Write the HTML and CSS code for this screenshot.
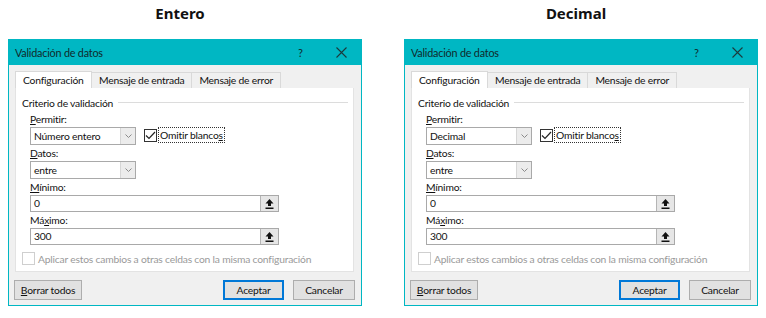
FILE: index.html
```html
<!DOCTYPE html>
<html>
<head>
    <title>Validación de datos</title>
    <link rel="stylesheet" href="styles.css">
</head>
<body>
    <div class="page">
        <div class="column">
            <h2 class="heading">Entero</h2>
            <div class="dialog">
                <div class="titlebar">
                    <span class="title">Validación de datos</span>
                    <span class="help">?</span>
                    <svg class="close" width="11" height="11" viewBox="0 0 11 11"><path d="M0.5 0.5 L10.5 10.5 M10.5 0.5 L0.5 10.5" stroke="#1b3a3c" stroke-width="1.1" fill="none"/></svg>
                </div>
                <div class="tabs">
                    <div class="tab active">Configuración</div>
                    <div class="tab">Mensaje de entrada</div>
                    <div class="tab">Mensaje de error</div>
                </div>
                <div class="panel">
                    <div class="group-title"><span>Criterio de validación</span></div>
                    <div class="label"><u>P</u>ermitir:</div>
                    <div class="row">
                        <div class="select"><span>Número entero</span><span class="arrow"><svg width="7" height="4" viewBox="0 0 7 4"><path d="M0.5 0.5 L3.5 3.5 L6.5 0.5" stroke="#8a8a8a" fill="none"/></svg></span></div>
                        <label class="check"><span class="box"><svg width="11" height="9" viewBox="0 0 11 9"><path d="M1 4.5 L4 7.5 L10 1" stroke="#222" stroke-width="1.2" fill="none"/></svg></span><span class="focus">Omitir blanco<u>s</u></span></label>
                    </div>
                    <div class="label"><u>D</u>atos:</div>
                    <div class="select"><span>entre</span><span class="arrow"><svg width="7" height="4" viewBox="0 0 7 4"><path d="M0.5 0.5 L3.5 3.5 L6.5 0.5" stroke="#8a8a8a" fill="none"/></svg></span></div>
                    <div class="label"><u>M</u>ínimo:</div>
                    <div class="input"><span>0</span><span class="ref"><svg width="9" height="10" viewBox="0 0 9 10"><path d="M4.5 0 L8.5 4.5 L6 4.5 L6 7 L3 7 L3 4.5 L0.5 4.5 Z M0.5 8.5 L8.5 8.5 L8.5 10 L0.5 10 Z" fill="#111"/></svg></span></div>
                    <div class="label">Má<u>x</u>imo:</div>
                    <div class="input"><span>300</span><span class="ref"><svg width="9" height="10" viewBox="0 0 9 10"><path d="M4.5 0 L8.5 4.5 L6 4.5 L6 7 L3 7 L3 4.5 L0.5 4.5 Z M0.5 8.5 L8.5 8.5 L8.5 10 L0.5 10 Z" fill="#111"/></svg></span></div>
                    <div class="apply"><span class="box disabled"></span>Aplicar estos cambios a otras celdas con la misma configuración</div>
                </div>
                <div class="buttons">
                    <button class="btn"><u>B</u>orrar todos</button>
                    <span class="spacer"></span>
                    <button class="btn primary">Aceptar</button>
                    <button class="btn">Cancelar</button>
                </div>
            </div>
        </div>
        <div class="column">
            <h2 class="heading">Decimal</h2>
            <div class="dialog">
                <div class="titlebar">
                    <span class="title">Validación de datos</span>
                    <span class="help">?</span>
                    <svg class="close" width="11" height="11" viewBox="0 0 11 11"><path d="M0.5 0.5 L10.5 10.5 M10.5 0.5 L0.5 10.5" stroke="#1b3a3c" stroke-width="1.1" fill="none"/></svg>
                </div>
                <div class="tabs">
                    <div class="tab active">Configuración</div>
                    <div class="tab">Mensaje de entrada</div>
                    <div class="tab">Mensaje de error</div>
                </div>
                <div class="panel">
                    <div class="group-title"><span>Criterio de validación</span></div>
                    <div class="label"><u>P</u>ermitir:</div>
                    <div class="row">
                        <div class="select"><span>Decimal</span><span class="arrow"><svg width="7" height="4" viewBox="0 0 7 4"><path d="M0.5 0.5 L3.5 3.5 L6.5 0.5" stroke="#8a8a8a" fill="none"/></svg></span></div>
                        <label class="check"><span class="box"><svg width="11" height="9" viewBox="0 0 11 9"><path d="M1 4.5 L4 7.5 L10 1" stroke="#222" stroke-width="1.2" fill="none"/></svg></span><span class="focus">Omitir blanco<u>s</u></span></label>
                    </div>
                    <div class="label"><u>D</u>atos:</div>
                    <div class="select"><span>entre</span><span class="arrow"><svg width="7" height="4" viewBox="0 0 7 4"><path d="M0.5 0.5 L3.5 3.5 L6.5 0.5" stroke="#8a8a8a" fill="none"/></svg></span></div>
                    <div class="label"><u>M</u>ínimo:</div>
                    <div class="input"><span>0</span><span class="ref"><svg width="9" height="10" viewBox="0 0 9 10"><path d="M4.5 0 L8.5 4.5 L6 4.5 L6 7 L3 7 L3 4.5 L0.5 4.5 Z M0.5 8.5 L8.5 8.5 L8.5 10 L0.5 10 Z" fill="#111"/></svg></span></div>
                    <div class="label">Má<u>x</u>imo:</div>
                    <div class="input"><span>300</span><span class="ref"><svg width="9" height="10" viewBox="0 0 9 10"><path d="M4.5 0 L8.5 4.5 L6 4.5 L6 7 L3 7 L3 4.5 L0.5 4.5 Z M0.5 8.5 L8.5 8.5 L8.5 10 L0.5 10 Z" fill="#111"/></svg></span></div>
                    <div class="apply"><span class="box disabled"></span>Aplicar estos cambios a otras celdas con la misma configuración</div>
                </div>
                <div class="buttons">
                    <button class="btn"><u>B</u>orrar todos</button>
                    <span class="spacer"></span>
                    <button class="btn primary">Aceptar</button>
                    <button class="btn">Cancelar</button>
                </div>
            </div>
        </div>
    </div>
</body>
</html>
```

FILE: styles.css
```css
body {
    margin: 0;
    background-color: #fff;
    font-family: Lato, "Noto Sans", sans-serif;
    font-size: 10.3px;
    letter-spacing: -0.2px;
    color: #111;
    white-space: nowrap;
}
.page {
    display: flex;
    gap: 42px;
    padding-left: 8px;
}
.column {
    width: 354px;
}
.heading {
    margin: 0;
    height: 39px;
    padding: 2px 10px 0 0;
    box-sizing: border-box;
    text-align: center;
    font-family: "Noto Sans", sans-serif;
    font-size: 15px;
    font-weight: bold;
    letter-spacing: 0;
    line-height: 22px;
    color: #111;
}
.dialog {
    box-sizing: border-box;
    height: 267px;
    border: 1px solid #00b7c3;
    background-color: #f0f0f0;
}
.titlebar {
    display: flex;
    align-items: center;
    height: 25px;
    padding-left: 6px;
    background-color: #00b7c3;
    color: #10292b;
    font-size: 10.8px;
}
.title {
    flex: 1;
}
.help {
    width: 38px;
    font-size: 11px;
}
.close {
    margin-right: 14px;
}
.tabs {
    display: flex;
    align-items: flex-end;
    height: 17px;
    margin: 6px 6px 0;
}
.tab {
    box-sizing: border-box;
    height: 16px;
    line-height: 14px;
    padding: 0 7px;
    border: 1px solid #d9d9d9;
    border-bottom: none;
    background-color: #f0f0f0;
    margin-left: -1px;
}
.tab:first-child {
    margin-left: 0;
}
.tab.active {
    height: 17px;
    background-color: #fff;
    line-height: 16px;
    width: 77px;
    position: relative;
    z-index: 1;
}
.panel {
    box-sizing: border-box;
    height: 184px;
    margin: 0 7px 0 6px;
    padding: 8px 0 0 6px;
    background-color: #fff;
    border: 1px solid #e3e3e3;
    border-top: none;
}
.group-title {
    display: flex;
    align-items: center;
    height: 15px;
    padding-right: 5px;
    margin-top: -1px;
}
.group-title::after {
    content: "";
    flex: 1;
    height: 1px;
    margin-left: 5px;
    background-color: #dcdcdc;
}
.label {
    height: 16px;
    line-height: 16px;
    padding-left: 8px;
}
.group-title + .label {
    margin-top: 1px;
}
.row {
    display: flex;
    align-items: center;
}
.select,
.input {
    box-sizing: border-box;
    display: flex;
    align-items: stretch;
    margin-left: 8px;
    background-color: #fff;
    border: 1px solid #a9a9a9;
}
.select {
    width: 106px;
    height: 18px;
}
.input {
    width: 249px;
    height: 17px;
}
.select span:first-child,
.input span:first-child {
    flex: 1;
    padding-left: 3px;
    line-height: 16px;
}
.input span:first-child {
    line-height: 15px;
}
.arrow {
    display: flex;
    align-items: center;
    justify-content: center;
    width: 14px;
    background-color: #ececec;
    border-left: 1px solid #d6d6d6;
}
.ref {
    display: flex;
    align-items: center;
    justify-content: center;
    width: 17px;
    background-color: #e6e6e6;
    border-left: 1px solid #b5b5b5;
}
.check {
    display: flex;
    align-items: center;
    margin-left: 8px;
    margin-top: -2px;
}
.box {
    box-sizing: border-box;
    display: flex;
    align-items: center;
    justify-content: center;
    width: 13px;
    height: 13px;
    border: 1px solid #333;
    background-color: #fff;
}
.focus {
    margin-left: 1px;
    padding: 0 1px;
    line-height: 14px;
    border: 1px dotted #333;
}
.apply {
    display: flex;
    align-items: center;
    margin-top: 7px;
    height: 13px;
    color: #9a9a9a;
}
.box.disabled {
    border-color: #cfcfcf;
    margin-right: 3px;
}
.buttons {
    display: flex;
    align-items: center;
    gap: 9px;
    margin: 8px 6px 0 5px;
}
.spacer {
    flex: 1;
}
.btn {
    box-sizing: border-box;
    height: 20px;
    padding: 0;
    font-family: inherit;
    font-size: 10.3px;
    letter-spacing: -0.2px;
    color: #111;
    background-color: #e1e1e1;
    border: 1px solid #adadad;
}
.btn:first-child {
    width: 68px;
}
.btn.primary {
    width: 61px;
    border: 1px solid #0078d7;
    box-shadow: inset 0 0 0 1px #0078d7;
}
.btn:last-child {
    width: 62px;
}
```
